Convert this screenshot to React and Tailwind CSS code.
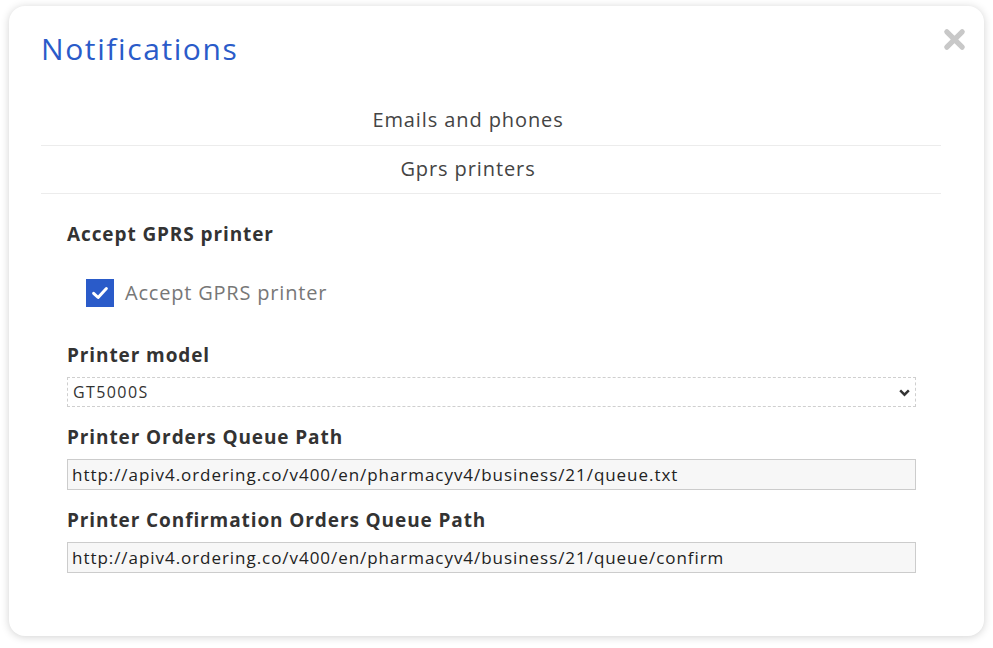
import React, { useState } from "react";

const font = { fontFamily: '"Open Sans", "Liberation Sans", sans-serif' };

const Field = ({ label, children }) => (
    <div className="flex flex-col">
        <label className="text-[19px] font-bold text-[#333] leading-[24px] tracking-[0.9px] mb-[10px]">{label}</label>
        {children}
    </div>
);

export default function App() {
    const [checked, setChecked] = useState(true);

    return (
        <div className="min-h-[648px] bg-white p-[6px_9px_12px_9px]" style={font}>
            <div className="relative bg-white rounded-[16px] shadow-[0_1px_8px_rgba(0,0,0,0.18)] h-[630px] px-[32px] pt-[21px] w-[975px]">
                <button className="absolute right-[18px] top-[22px] text-[#c8c8c8]">
                    <svg width="23" height="23" viewBox="0 0 24 24">
                        <path d="M4 4 L20 20 M20 4 L4 20" stroke="currentColor" strokeWidth="5.5" strokeLinecap="round" />
                    </svg>
                </button>

                <h1 className="text-[30px] text-[#2a5bc9] leading-[44px] tracking-[1.6px]">Notifications</h1>

                <div className="mt-[27px] w-[900px]">
                    <div className="h-[48px] flex items-center justify-center pr-[46px] pb-[3px] border-b border-[#ececec] text-[20px] tracking-[0.9px] text-[#444]">
                        Emails and phones
                    </div>
                    <div className="h-[48px] flex items-center justify-center pr-[46px] pb-[1px] border-b border-[#ececec] text-[20px] tracking-[0.9px] text-[#444]">
                        Gprs printers
                    </div>
                </div>

                <div className="px-[26px] pt-[28px] w-[901px]">
                    <h3 className="text-[19px] font-bold text-[#333] leading-[24px] tracking-[0.9px]">Accept GPRS printer</h3>

                    <label className="flex items-center gap-[11px] ml-[19px] mt-[32px]">
                        <span
                            onClick={() => setChecked(!checked)}
                            className="w-[28px] h-[28px] bg-[#2a5bc9] flex items-center justify-center"
                        >
                            {checked && (
                                <svg width="18" height="18" viewBox="0 0 24 24">
                                    <path d="M3.5 12.5 L9.5 18 L20.5 6" fill="none" stroke="white" strokeWidth="4" strokeLinecap="round" strokeLinejoin="round" />
                                </svg>
                            )}
                        </span>
                        <span className="text-[20px] text-[#777] tracking-[0.8px]">Accept GPRS printer</span>
                    </label>

                    <div className="mt-[35px] flex flex-col gap-[18px]">
                        <Field label="Printer model">
                            <div className="relative h-[30px] border border-dashed border-[#cfcfcf] flex items-center px-[5px] text-[16px] tracking-[1.4px] text-[#333]">
                                GT5000S
                                <svg className="absolute right-[4px] top-[8px]" width="13" height="13" viewBox="0 0 24 24">
                                    <path d="M4 8 L12 16 L20 8" fill="none" stroke="#333" strokeWidth="4.5" />
                                </svg>
                            </div>
                        </Field>
                        <Field label="Printer Orders Queue Path">
                            <input
                                readOnly
                                value="http://apiv4.ordering.co/v400/en/pharmacyv4/business/21/queue.txt"
                                className="h-[31px] border border-[#cccccc] bg-[#f7f7f7] px-[4px] text-[17px] tracking-[0.95px] text-[#222] outline-none"
                            />
                        </Field>
                        <Field label="Printer Confirmation Orders Queue Path">
                            <input
                                readOnly
                                value="http://apiv4.ordering.co/v400/en/pharmacyv4/business/21/queue/confirm"
                                className="h-[31px] border border-[#cccccc] bg-[#f7f7f7] px-[4px] text-[17px] tracking-[0.95px] text-[#222] outline-none"
                            />
                        </Field>
                    </div>
                </div>
            </div>
        </div>
    );
}
